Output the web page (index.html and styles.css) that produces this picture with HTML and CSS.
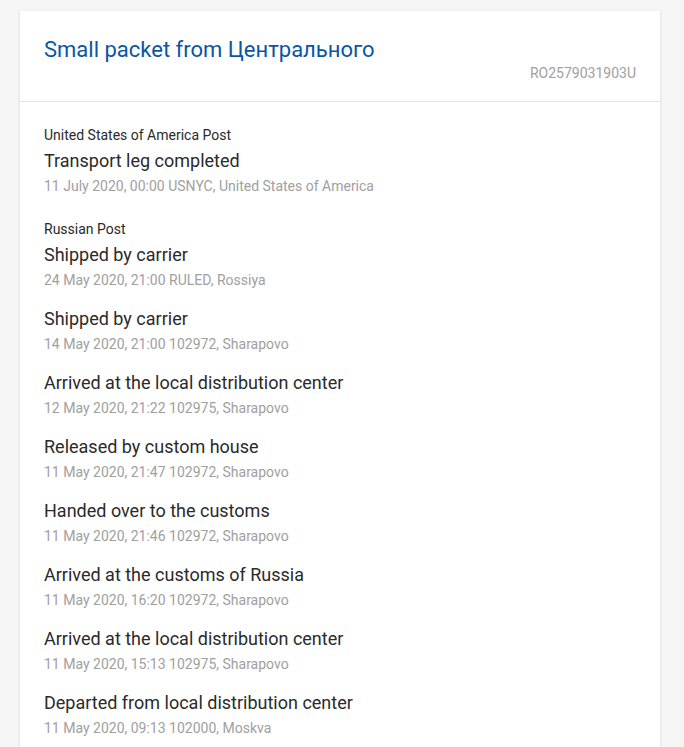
FILE: index.html
```html
<!DOCTYPE html>
<html lang="en">
<head>
    <meta charset="UTF-8">
    <meta name="viewport" content="width=device-width, initial-scale=1.0">
    <title>Tracking</title>
    <link rel="stylesheet" href="styles.css">
</head>

<body>
    <div class="track-card">
        <div class="track-head">
            <h2>Small packet from Центрального</h2>
            <div class="track-number">RO2579031903U</div>
        </div>

        <div class="track-events">
            <div class="carrier">
                <div class="carrier-name">United States of America Post</div>
                <div class="event">
                    <div class="event-title">Transport leg completed</div>
                    <div class="event-meta">11 July 2020, 00:00 USNYC, United States of America</div>
                </div>
            </div>

            <div class="carrier">
                <div class="carrier-name">Russian Post</div>
                <div class="event">
                    <div class="event-title">Shipped by carrier</div>
                    <div class="event-meta">24 May 2020, 21:00 RULED, Rossiya</div>
                </div>
                <div class="event">
                    <div class="event-title">Shipped by carrier</div>
                    <div class="event-meta">14 May 2020, 21:00 102972, Sharapovo</div>
                </div>
                <div class="event">
                    <div class="event-title">Arrived at the local distribution center</div>
                    <div class="event-meta">12 May 2020, 21:22 102975, Sharapovo</div>
                </div>
                <div class="event">
                    <div class="event-title">Released by custom house</div>
                    <div class="event-meta">11 May 2020, 21:47 102972, Sharapovo</div>
                </div>
                <div class="event">
                    <div class="event-title">Handed over to the customs</div>
                    <div class="event-meta">11 May 2020, 21:46 102972, Sharapovo</div>
                </div>
                <div class="event">
                    <div class="event-title">Arrived at the customs of Russia</div>
                    <div class="event-meta">11 May 2020, 16:20 102972, Sharapovo</div>
                </div>
                <div class="event">
                    <div class="event-title">Arrived at the local distribution center</div>
                    <div class="event-meta">11 May 2020, 15:13 102975, Sharapovo</div>
                </div>
                <div class="event">
                    <div class="event-title">Departed from local distribution center</div>
                    <div class="event-meta">11 May 2020, 09:13 102000, Moskva</div>
                </div>
            </div>
        </div>
    </div>
</body>
</html>
```

FILE: styles.css
```css
* {
    margin: 0;
    padding: 0;
    box-sizing: border-box;
}

body {
    font-family: Roboto, 'Liberation Sans', sans-serif;
    background: #f5f5f5;
    color: #2a2a2a;
    padding: 11px 24px 0 20px;
}

/* card */
.track-card {
    background: #fff;
    box-shadow: 0 1px 3px rgba(0, 0, 0, 0.12);
    width: 640px;
}

.track-head {
    padding: 25px 24px 20px;
    border-bottom: 1px solid #e3e3e3;
}

.track-head h2 {
    font-size: 22px;
    line-height: 28px;
    font-weight: 400;
    color: #0b55a5;
}

.track-number {
    text-align: right;
    font-size: 14px;
    line-height: 16px;
    color: #a0a0a0;
    margin-top: 1px;
}

/* events */
.track-events {
    padding: 25px 24px 20px;
}

.carrier + .carrier {
    margin-top: 27px;
}

.carrier-name {
    font-size: 14px;
    line-height: 16px;
    margin-bottom: 6px;
}

.event + .event {
    margin-top: 19px;
}

.event-title {
    font-size: 18px;
    line-height: 24px;
}

.event-meta {
    font-size: 14px;
    line-height: 16px;
    color: #a0a0a0;
    margin-top: 5px;
}
```
